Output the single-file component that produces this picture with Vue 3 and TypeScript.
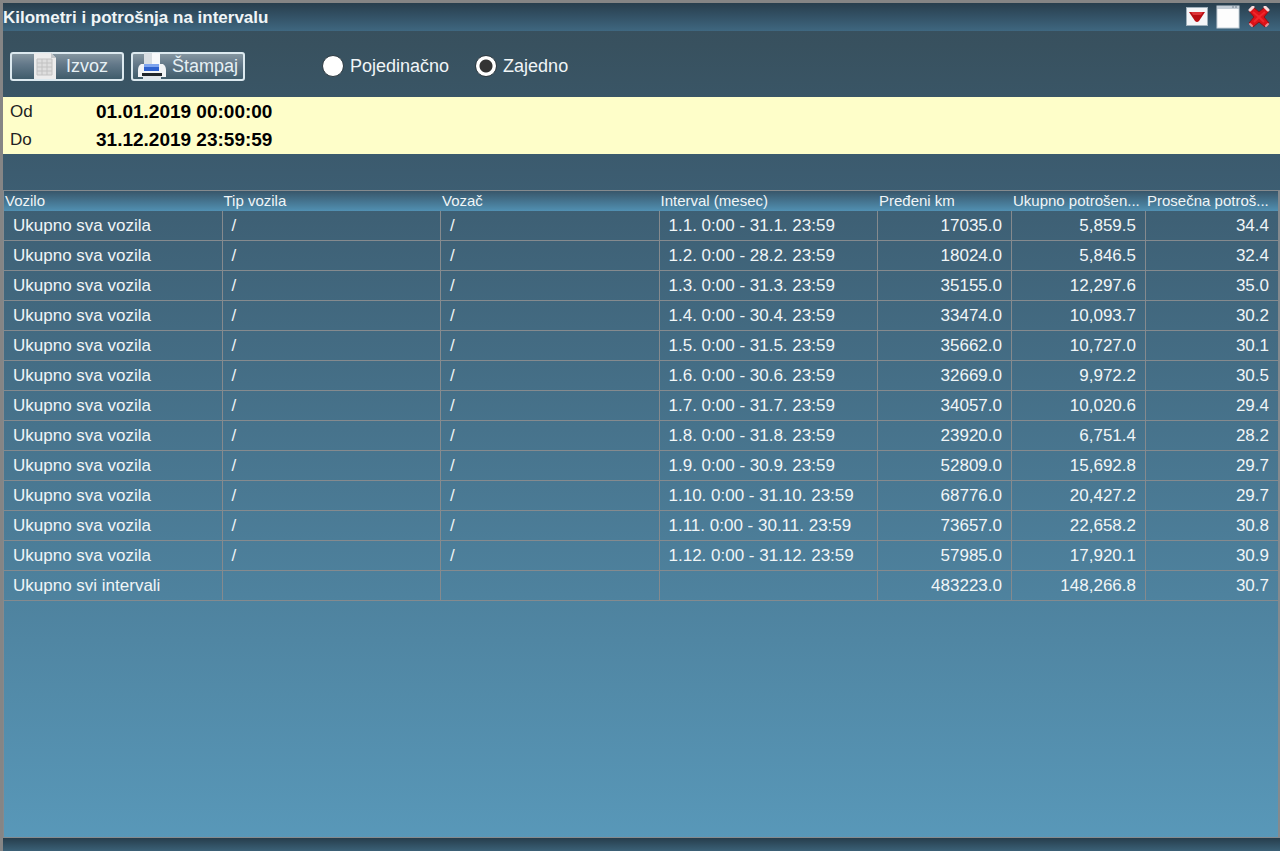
<script setup lang="ts">
import { ref } from 'vue'

interface Row {
  vehicle: string
  type: string
  driver: string
  interval: string
  km: string
  fuel: string
  average: string
}

const mode = ref<'single' | 'together'>('together')

const headers: string[] = [
  'Vozilo',
  'Tip vozila',
  'Vozač',
  'Interval (mesec)',
  'Pređeni km',
  'Ukupno potrošen...',
  'Prosečna potroš...',
]

const months: [string, string, string, string][] = [
  ['1.1. 0:00 - 31.1. 23:59', '17035.0', '5,859.5', '34.4'],
  ['1.2. 0:00 - 28.2. 23:59', '18024.0', '5,846.5', '32.4'],
  ['1.3. 0:00 - 31.3. 23:59', '35155.0', '12,297.6', '35.0'],
  ['1.4. 0:00 - 30.4. 23:59', '33474.0', '10,093.7', '30.2'],
  ['1.5. 0:00 - 31.5. 23:59', '35662.0', '10,727.0', '30.1'],
  ['1.6. 0:00 - 30.6. 23:59', '32669.0', '9,972.2', '30.5'],
  ['1.7. 0:00 - 31.7. 23:59', '34057.0', '10,020.6', '29.4'],
  ['1.8. 0:00 - 31.8. 23:59', '23920.0', '6,751.4', '28.2'],
  ['1.9. 0:00 - 30.9. 23:59', '52809.0', '15,692.8', '29.7'],
  ['1.10. 0:00 - 31.10. 23:59', '68776.0', '20,427.2', '29.7'],
  ['1.11. 0:00 - 30.11. 23:59', '73657.0', '22,658.2', '30.8'],
  ['1.12. 0:00 - 31.12. 23:59', '57985.0', '17,920.1', '30.9'],
]

const rows: Row[] = [
  ...months.map(([interval, km, fuel, average]) => ({
    vehicle: 'Ukupno sva vozila',
    type: '/',
    driver: '/',
    interval,
    km,
    fuel,
    average,
  })),
  {
    vehicle: 'Ukupno svi intervali',
    type: '',
    driver: '',
    interval: '',
    km: '483223.0',
    fuel: '148,266.8',
    average: '30.7',
  },
]
</script>

<template>
  <main class="window">
    <header class="titlebar">
      <h1>Kilometri i potrošnja na intervalu</h1>
      <div class="controls">
        <button type="button">
          <svg width="22" height="20" viewBox="0 0 22 20">
            <rect x="0.5" y="0.5" width="21" height="18" fill="#f4f6f8" stroke="#9fb0bb" />
            <path d="M3 5h16l-6 9q-2 2-4 0z" fill="#b80d12" />
            <path d="M5 5h12l-2 3H7z" fill="#dc3438" />
          </svg>
        </button>
        <button type="button">
          <svg width="24" height="24" viewBox="0 0 24 24">
            <rect x="1" y="1" width="22" height="22" fill="#fdfdfd" stroke="#c5d0d8" />
            <path d="M1 1h22v3H1z" fill="#c3cdd6" />
            <path d="M16 2h2M19 2h2" stroke="#71808c" />
          </svg>
        </button>
        <button type="button">
          <svg width="22" height="22" viewBox="0 0 22 22">
            <path d="M5 1l6 5 6-5 4 4-5 6 5 6-4 4-6-5-6 5-4-4 5-6-5-6z" fill="#dd1218" stroke="#8e1015" stroke-linejoin="round" />
            <path d="M5 6l6 5 6-5M6 16l5-5 5 5" fill="none" stroke="#f0262c" stroke-width="2" />
            <path d="M2 4l3-3M17 1l3 3" stroke="#fbdcdc" stroke-width="3" stroke-linecap="round" />
            <path d="M2 18l2 2M18 20l2-2" stroke="#ee8d90" stroke-width="2" stroke-linecap="round" />
          </svg>
        </button>
      </div>
    </header>

    <section class="toolbar">
      <button type="button" class="action export">
        <svg width="22" height="26" viewBox="0 0 22 26">
          <path d="M0 0h17l5 5v21H0z" fill="#ececec" />
          <path d="M17 0v5h5z" fill="#c4c8ca" />
          <path d="M3 6h15v16H3z" fill="#dedede" />
          <path d="M3 6h15M3 10h15M3 14h15M3 18h15M3 22h15M3 6v16M8 6v16M13 6v16M18 6v16" stroke="#c2c2c2" fill="none" />
        </svg>
        <span>Izvoz</span>
      </button>
      <button type="button" class="action print">
        <svg width="28" height="26" viewBox="0 0 28 26">
          <path d="M6 0h16v14H6z" fill="#d9dee2" />
          <path d="M14 0h8v12h-8z" fill="#f8f9fa" />
          <path d="M3 11h22q3 2 3 6v7H0v-7q0-4 3-6z" fill="#f1f3f6" />
          <path d="M6 11h15v7H6z" fill="#2f62cf" />
          <path d="M6 11h15v3H6z" fill="#7ea4ee" />
          <path d="M4 20h20v3H4z" fill="#20252a" />
          <path d="M5 23h18v3H5z" fill="#dfe5ec" />
        </svg>
        <span>Štampaj</span>
      </button>
      <div class="modes">
        <label><input v-model="mode" type="radio" name="mode" value="single" />Pojedinačno</label>
        <label><input v-model="mode" type="radio" name="mode" value="together" />Zajedno</label>
      </div>
    </section>

    <dl class="period">
      <dt>Od</dt>
      <dd>01.01.2019 00:00:00</dd>
      <dt>Do</dt>
      <dd>31.12.2019 23:59:59</dd>
    </dl>

    <section class="grid">
      <table>
        <colgroup>
          <col span="4" />
          <col span="2" class="number" />
          <col class="average" />
        </colgroup>
        <thead>
          <tr>
            <th v-for="h in headers" :key="h" scope="col">{{ h }}</th>
          </tr>
        </thead>
        <tbody>
          <tr v-for="(r, i) in rows" :key="i">
            <td>{{ r.vehicle }}</td>
            <td>{{ r.type }}</td>
            <td>{{ r.driver }}</td>
            <td>{{ r.interval }}</td>
            <td class="num">{{ r.km }}</td>
            <td class="num">{{ r.fuel }}</td>
            <td class="num">{{ r.average }}</td>
          </tr>
        </tbody>
      </table>
    </section>
    <footer class="bottom"></footer>
  </main>
</template>

<style>
body {
  margin: 0;
}
</style>

<style scoped>
.window {
  box-sizing: border-box;
  min-height: 100vh;
  display: flex;
  flex-direction: column;
  border-top: 3px solid #858585;
  border-left: 3px solid #858585;
  background: linear-gradient(#374e5c, #38515f 5%, #3c5c70 20%, #5999ba);
  color: #f0f5f7;
  font-family: "Liberation Sans", Arial, sans-serif;
  font-size: 17px;
}
.titlebar {
  display: flex;
  align-items: center;
  justify-content: space-between;
  height: 28px;
  padding-right: 10px;
  background: linear-gradient(#283e4d, #3f6780);
}
h1 {
  margin: 0;
  font-size: 17px;
  line-height: 28px;
  padding-top: 2px;
  white-space: nowrap;
}
.controls {
  display: flex;
  align-items: center;
  gap: 8px;
}
.controls button {
  display: flex;
  padding: 0;
  border: 0;
  background: none;
}
.toolbar {
  box-sizing: border-box;
  display: flex;
  align-items: center;
  gap: 7px;
  height: 66px;
  padding: 4px 7px 0;
}
.action {
  box-sizing: border-box;
  display: flex;
  align-items: center;
  justify-content: center;
  gap: 10px;
  width: 114px;
  height: 29px;
  padding: 0;
  border: 2px solid #dce9ef;
  border-radius: 3px;
  background: linear-gradient(#8596a0, #64798a 40%, #3f5c6b);
  color: #e6f0f4;
  font: inherit;
  font-size: 18px;
}
.export {
  padding-left: 8px;
}
.print {
  gap: 6px;
}
.modes {
  display: flex;
  gap: 26px;
  margin-left: 70px;
}
label {
  display: flex;
  align-items: center;
  gap: 6px;
  font-size: 18px;
}
input {
  appearance: none;
  box-sizing: border-box;
  width: 22px;
  height: 22px;
  margin: 0;
  border: 1px solid #2d3940;
  border-radius: 50%;
  background: #ffffff;
}
input:checked {
  background: radial-gradient(circle, #333333 6px, #ffffff 7px);
}
.period {
  display: grid;
  grid-template-columns: 86px 1fr;
  margin: 0 0 36px;
  padding: 1px 7px 0;
  background: #fefec9;
  color: #000000;
  line-height: 28px;
}
.period dt {
  color: #222222;
}
.period dd {
  margin: 0;
  font-size: 19px;
  font-weight: bold;
}
.grid {
  flex: 1;
  border: 1px solid #858a8e;
  border-right-width: 2px;
}
table {
  width: 100%;
  table-layout: fixed;
  border-collapse: separate;
  border-spacing: 0;
}
.number {
  width: 134px;
}
.average {
  width: 132px;
}
thead {
  background: linear-gradient(#38566a, #5190b2);
}
th {
  height: 20px;
  padding: 0 1px;
  font-size: 15px;
  line-height: 20px;
  font-weight: normal;
  text-align: left;
  white-space: nowrap;
}
td {
  box-sizing: border-box;
  height: 30px;
  padding: 0 9px;
  border-right: 1px solid #858a8e;
  border-bottom: 1px solid #858a8e;
  line-height: 29px;
  white-space: nowrap;
}
td:last-child {
  border-right: 0;
}
.num {
  text-align: right;
}
.bottom {
  height: 13px;
  background: linear-gradient(#263d4c, #3b6177);
}
</style>
